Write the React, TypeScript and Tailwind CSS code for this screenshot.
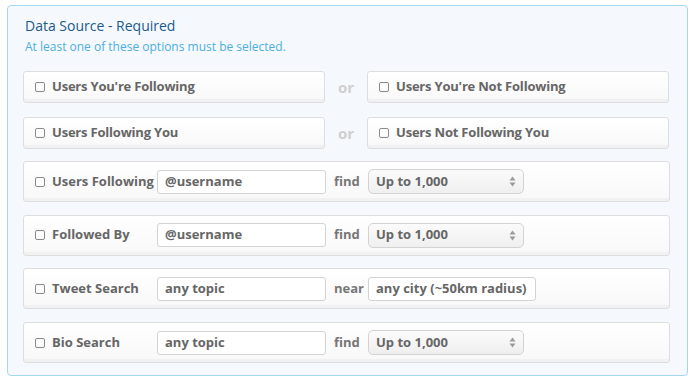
import React from "react";

const font = { fontFamily: "'Open Sans', Lato, sans-serif" };

function Check() {
  return <span className="inline-block w-[10px] h-[10px] border border-[#8a8a8a] rounded-[2px] bg-white shrink-0" />;
}

function Box({ children, className = "" }: { children: React.ReactNode; className?: string }) {
  return (
    <div
      className={
        "flex items-center rounded-[3px] border border-[#dedede] bg-gradient-to-b from-white to-[#f8f8f8] shadow-[inset_0_-3px_0_#f1f1f1] " +
        className
      }
    >
      {children}
    </div>
  );
}

function Arrows() {
  return (
    <svg width="7" height="11" viewBox="0 0 7 11" className="shrink-0">
      <path d="M3.5 0.5 L6.5 4.5 L0.5 4.5 Z" fill="#9a9a9a" />
      <path d="M3.5 10.5 L6.5 6.5 L0.5 6.5 Z" fill="#9a9a9a" />
    </svg>
  );
}

function Input({ text, w = "w-[169px]" }: { text: string; w?: string }) {
  return (
    <div className={"h-[24px] rounded-[3px] border border-[#d3d3d3] bg-white flex items-center px-[7px] text-[13px] font-bold text-[#666] whitespace-nowrap " + w}>
      {text}
    </div>
  );
}

function Select() {
  return (
    <div className="w-[156px] h-[25px] rounded-[5px] border border-[#d3d3d3] bg-gradient-to-b from-[#fbfbfb] to-[#efefef] flex items-center justify-between pl-[7px] pr-[7px] text-[13px] font-bold text-[#666]">
      <span>Up to 1,000</span>
      <Arrows />
    </div>
  );
}

function Simple({ label }: { label: string }) {
  return (
    <Box className="w-[302px] h-[32px] pl-[11px] gap-[7px]">
      <Check />
      <span className="text-[13px] font-bold text-[#666] tracking-[-0.2px]">{label}</span>
    </Box>
  );
}

function Full({ label, input, word, right }: { label: string; input: string; word: string; right: React.ReactNode }) {
  return (
    <Box className="w-[647px] h-[41px] pl-[11px]">
      <Check />
      <span className="ml-[7px] w-[105px] text-[13px] font-bold text-[#666] whitespace-nowrap">{label}</span>
      <Input text={input} />
      <span className="w-[42px] pl-[8px] text-[13px] font-bold text-[#777]">{word}</span>
      {right}
    </Box>
  );
}

export default function App() {
  return (
    <div className="w-[700px] h-[384px] bg-white pt-[5px] pl-[7px]" style={font}>
      <div className="w-[681px] h-[371px] rounded-[4px] border border-[#a3d9f0] bg-[#f5f9fd] pl-[15px] pt-[10px]">
        <div className="pl-[2px] text-[14px] leading-[20px] text-[#21598a]">Data Source - Required</div>
        <div className="pl-[2px] mt-[3px] text-[12px] leading-[16px] text-[#4daee0]">At least one of these options must be selected.</div>
        <div className="mt-[16px] flex flex-col gap-[14px]">
          <div className="flex items-center">
            <Simple label="Users You're Following" />
            <span className="w-[42px] text-center text-[15px] font-bold text-[#cfcfcf]">or</span>
            <Simple label="Users You're Not Following" />
          </div>
          <div className="flex items-center">
            <Simple label="Users Following You" />
            <span className="w-[42px] text-center text-[15px] font-bold text-[#cfcfcf]">or</span>
            <Simple label="Users Not Following You" />
          </div>
        </div>
        <div className="mt-[12px] flex flex-col gap-[12.7px]">
          <Full label="Users Following" input="@username" word="find" right={<Select />} />
          <Full label="Followed By" input="@username" word="find" right={<Select />} />
          <Full label="Tweet Search" input="any topic" word="near" right={<Input text="any city (~50km radius)" w="w-[168px]" />} />
          <Full label="Bio Search" input="any topic" word="find" right={<Select />} />
        </div>
      </div>
    </div>
  );
}
